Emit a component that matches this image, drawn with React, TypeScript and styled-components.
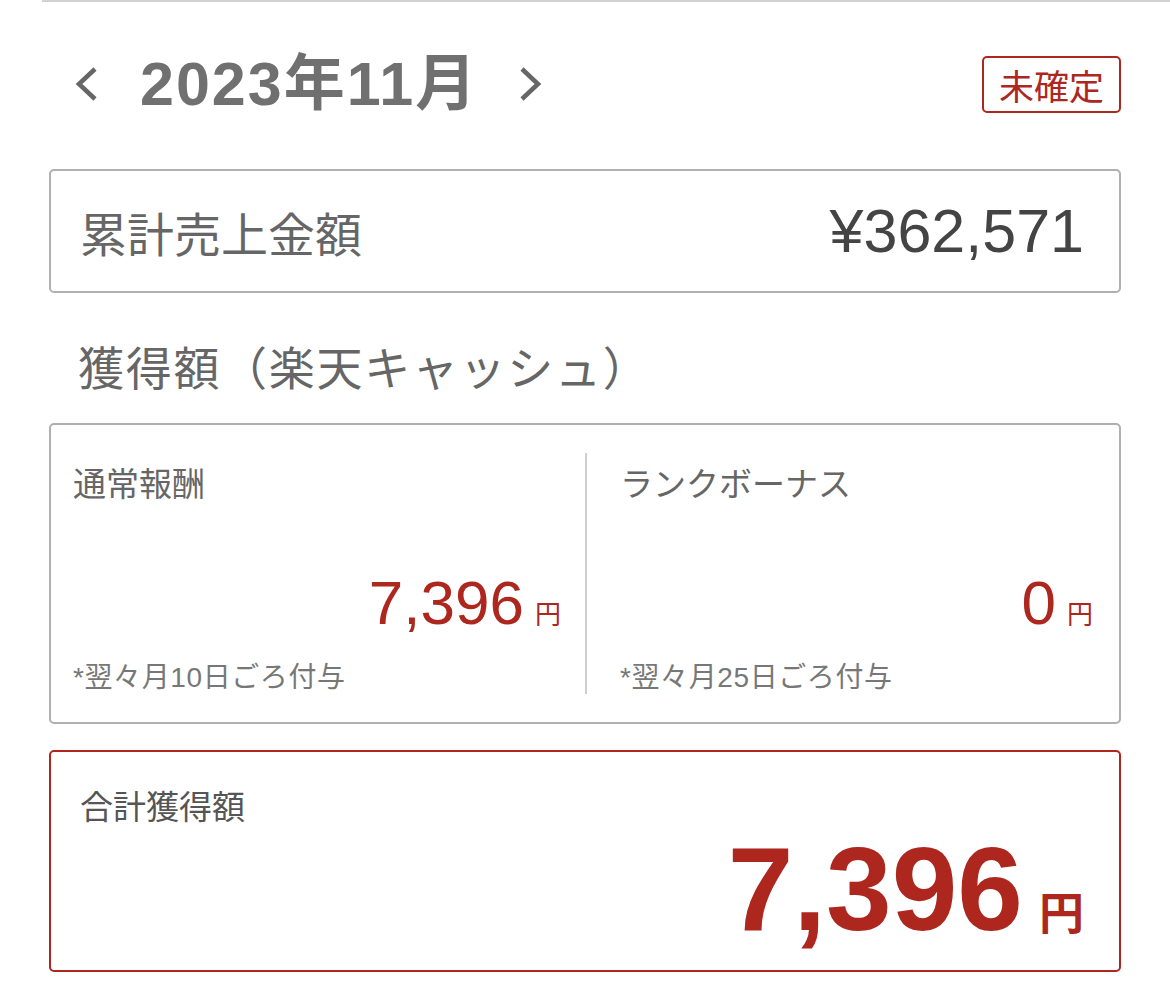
import React from "react";
import styled, { createGlobalStyle } from "styled-components";

const GlobalStyle = createGlobalStyle`
  html, body {
    margin: 0;
    padding: 0;
    background: #ffffff;
  }
  body {
    font-family: "Liberation Sans", "Noto Sans CJK JP", sans-serif;
    -webkit-font-smoothing: antialiased;
  }
`;

const RED = "#ad271f";

const Page = styled.div`
  width: 1170px;
  height: 987px;
  box-sizing: border-box;
  padding: 0 49px 0 49px;
  overflow: hidden;
`;

const TopRule = styled.div`
  height: 2px;
  margin: 0 -49px 0 -7px;
  background: #d2d2d2;
`;

const Header = styled.header`
  height: 164px;
  margin-bottom: 3px;
  display: flex;
  align-items: center;
  padding-left: 24px;
`;

const MonthNav = styled.div`
  display: flex;
  align-items: center;
`;

const NavButton = styled.button<{ $gap?: number }>`
  border: none;
  background: none;
  padding: 0;
  margin: 0;
  margin-left: ${(p) => p.$gap ?? 0}px;
  display: flex;
  align-items: center;
  cursor: pointer;
`;

const MonthTitle = styled.h1`
  margin: 0 0 0 41px;
  font-size: 61px;
  font-weight: 700;
  color: #707070;
  line-height: 1;
  letter-spacing: 2px;
`;

const StatusBadge = styled.div`
  margin-left: auto;
  width: 139px;
  height: 57px;
  box-sizing: border-box;
  border: 2px solid ${RED};
  border-radius: 5px;
  display: flex;
  align-items: center;
  justify-content: center;
  font-family: "Noto Sans CJK JP", sans-serif;
  font-size: 35px;
  color: ${RED};
  line-height: 1;
`;

const SalesCard = styled.section`
  height: 124px;
  box-sizing: border-box;
  border: 2px solid #b0b0b0;
  border-radius: 5px;
  display: flex;
  align-items: center;
  justify-content: space-between;
  padding: 0 35px 0 29px;
`;

const SalesLabel = styled.span`
  font-family: "Noto Sans CJK JP", sans-serif;
  font-size: 47px;
  color: #666666;
  line-height: 1;
`;

const SalesValue = styled.span`
  font-size: 61px;
  color: #444444;
  line-height: 1;
`;

const SectionHeading = styled.h2`
  margin: 40px 0 26px 29px;
  font-family: "Noto Sans CJK JP", sans-serif;
  font-size: 46px;
  font-weight: 400;
  color: #666666;
  line-height: 64px;
  letter-spacing: 1.7px;
`;

const EarningsCard = styled.section`
  height: 301px;
  box-sizing: border-box;
  border: 2px solid #b0b0b0;
  border-radius: 5px;
  padding: 28px 0;
  display: grid;
  grid-template-columns: 1fr 1fr;
`;

const EarningsColumn = styled.div<{ $divider?: boolean }>`
  display: flex;
  flex-direction: column;
  box-sizing: border-box;
  padding: ${(p) => (p.$divider ? "0 26px 0 33px" : "0 24px 0 22px")};
  border-left: ${(p) => (p.$divider ? "2px solid #cfcfcf" : "none")};
`;

const ColumnLabel = styled.div`
  margin-top: 9px;
  font-family: "Noto Sans CJK JP", sans-serif;
  font-size: 33px;
  color: #666666;
  line-height: 40px;
`;

const AmountRow = styled.div<{ $size: "md" | "lg" }>`
  margin-top: auto;
  display: flex;
  justify-content: flex-end;
  align-items: baseline;
  gap: ${(p) => (p.$size === "lg" ? 16 : 11)}px;
  color: ${RED};
`;

const AmountNumber = styled.span<{ $size: "md" | "lg" }>`
  font-size: ${(p) => (p.$size === "lg" ? 118 : 62)}px;
  font-weight: ${(p) => (p.$size === "lg" ? 700 : 400)};
  line-height: 1;
`;

const AmountUnit = styled.span<{ $size: "md" | "lg" }>`
  font-family: "Noto Sans CJK JP", sans-serif;
  font-size: ${(p) => (p.$size === "lg" ? 45 : 26)}px;
  font-weight: ${(p) => (p.$size === "lg" ? 700 : 400)};
  line-height: 1;
`;

const Footnote = styled.div`
  margin-top: 28px;
  font-size: 28px;
  letter-spacing: 0.6px;
  color: #777777;
  line-height: 32px;
`;

const TotalCard = styled.section`
  margin-top: 26px;
  height: 222px;
  box-sizing: border-box;
  border: 2px solid ${RED};
  border-radius: 5px;
  padding: 33px 35px 22px 29px;
  display: flex;
  flex-direction: column;
`;

const TotalLabel = styled.div`
  font-family: "Noto Sans CJK JP", sans-serif;
  font-size: 33px;
  color: #555555;
  line-height: 40px;
`;

const Chevron = ({ dir }: { dir: "left" | "right" }) => (
  <svg width="26" height="36" viewBox="0 0 26 36" aria-hidden="true">
    <polyline
      points={dir === "left" ? "22,3 6,18 22,33" : "4,3 20,18 4,33"}
      fill="none"
      stroke="#666666"
      strokeWidth="4.5"
      strokeLinejoin="miter"
    />
  </svg>
);

const Amount = ({ value, size }: { value: string; size: "md" | "lg" }) => (
  <AmountRow $size={size}>
    <AmountNumber $size={size}>{value}</AmountNumber>
    <AmountUnit $size={size}>円</AmountUnit>
  </AmountRow>
);

export default function App() {
  return (
    <>
      <GlobalStyle />
      <Page>
        <TopRule />
        <Header>
          <MonthNav>
            <NavButton aria-label="前月">
              <Chevron dir="left" />
            </NavButton>
            <MonthTitle>2023年11月</MonthTitle>
            <NavButton $gap={40} aria-label="翌月">
              <Chevron dir="right" />
            </NavButton>
          </MonthNav>
          <StatusBadge>未確定</StatusBadge>
        </Header>

        <SalesCard>
          <SalesLabel>累計売上金額</SalesLabel>
          <SalesValue>¥362,571</SalesValue>
        </SalesCard>

        <SectionHeading>獲得額（楽天キャッシュ）</SectionHeading>

        <EarningsCard>
          <EarningsColumn>
            <ColumnLabel>通常報酬</ColumnLabel>
            <Amount value="7,396" size="md" />
            <Footnote>*翌々月10日ごろ付与</Footnote>
          </EarningsColumn>
          <EarningsColumn $divider>
            <ColumnLabel>ランクボーナス</ColumnLabel>
            <Amount value="0" size="md" />
            <Footnote>*翌々月25日ごろ付与</Footnote>
          </EarningsColumn>
        </EarningsCard>

        <TotalCard>
          <TotalLabel>合計獲得額</TotalLabel>
          <Amount value="7,396" size="lg" />
        </TotalCard>
      </Page>
    </>
  );
}
